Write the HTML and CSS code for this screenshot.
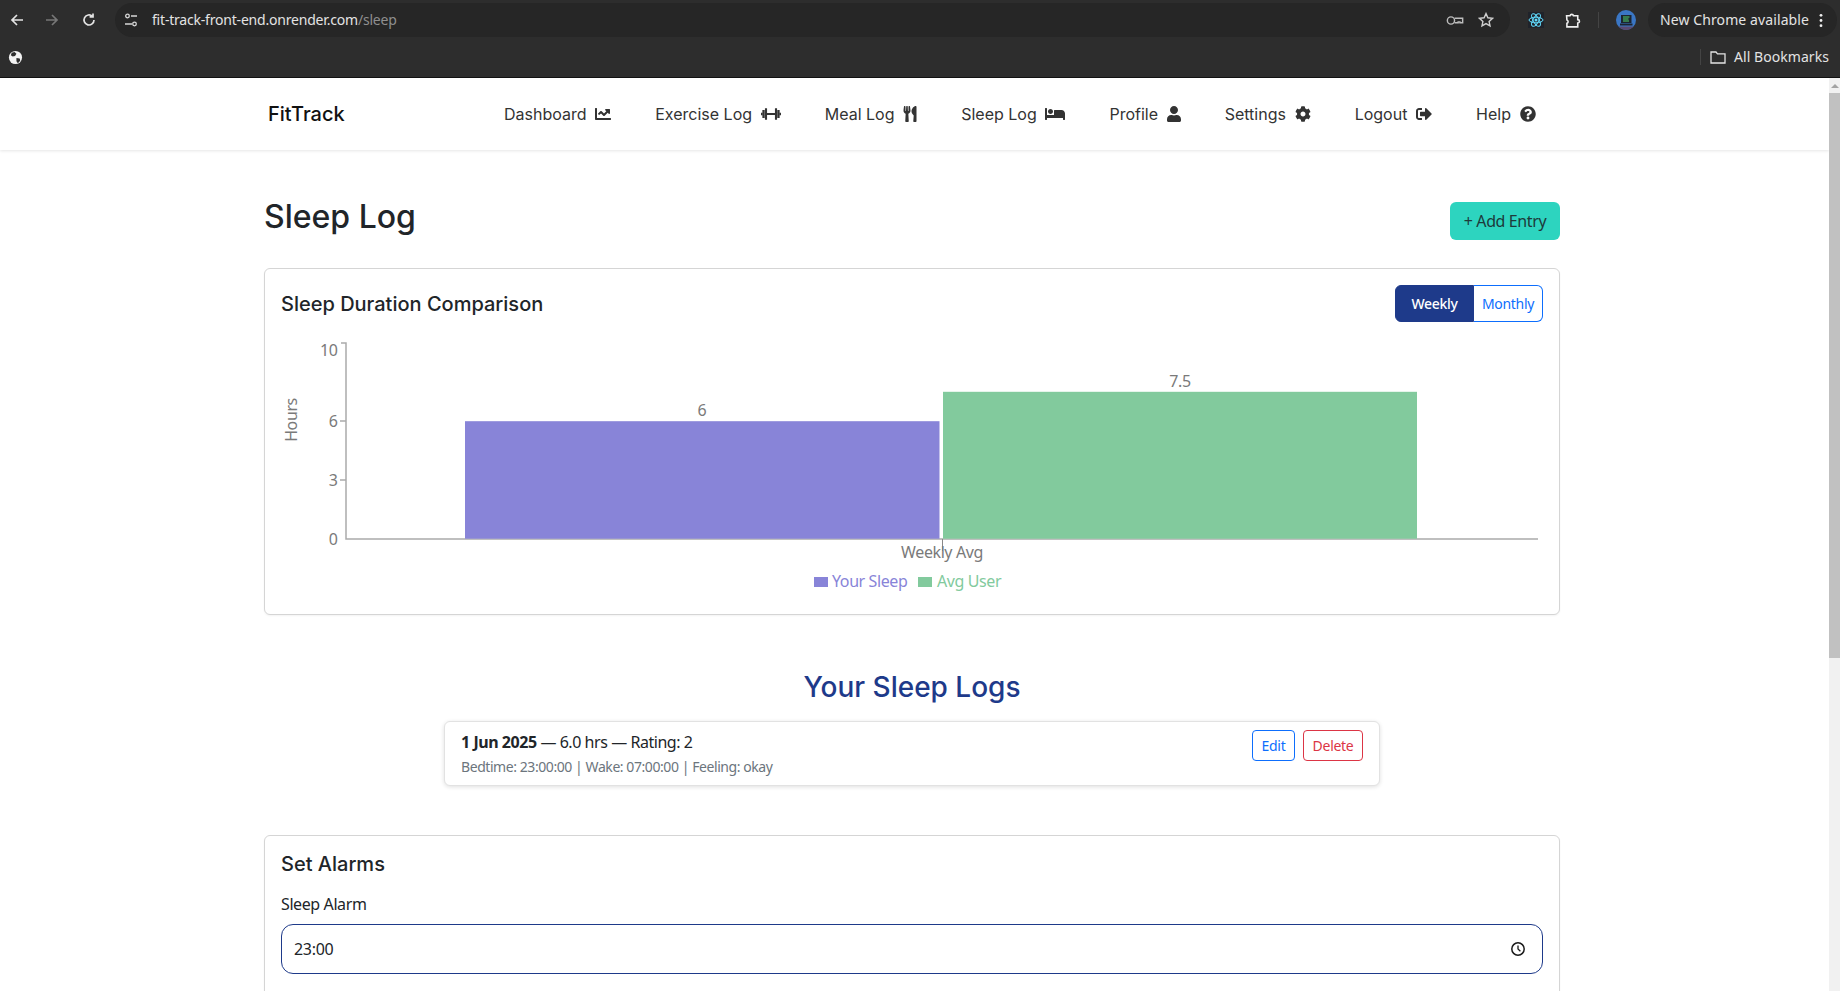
FILE: index.html
```html
<!DOCTYPE html>
<html lang="en">
<head>
  <meta charset="UTF-8">
  <title>FitTrack - Sleep Log</title>
  <link rel="stylesheet" href="styles.css">
</head>
<body>
  <div class="chrome">
    <div class="toolbar">
      <svg class="tb-icon" viewBox="0 0 16 16"><path d="M14 8H3M8 3L3 8l5 5" fill="none" stroke="#e3e3e3" stroke-width="1.7"/></svg>
      <svg class="tb-icon tb-next" viewBox="0 0 16 16"><path d="M2 8h11M8 3l5 5-5 5" fill="none" stroke="#777" stroke-width="1.7"/></svg>
      <svg class="tb-icon tb-reload" viewBox="0 0 16 16"><path d="M13 8a5 5 0 1 1-1.6-3.7M12 1.5v3.4H8.6" fill="none" stroke="#e3e3e3" stroke-width="1.7"/></svg>
      <div class="omnibox">
        <svg class="tune" viewBox="0 0 16 16"><g fill="none" stroke="#d8d8d8" stroke-width="1.3"><circle cx="4.5" cy="4" r="1.8"/><circle cx="11.5" cy="12" r="1.8"/><path d="M8 4h6M2 12h7"/></g></svg>
        <span class="url">fit-track-front-end.onrender.com<span class="url-path">/sleep</span></span>
        <svg class="key" viewBox="0 0 20 12"><g fill="none" stroke="#bdbdbd" stroke-width="1.6"><circle cx="5.5" cy="6" r="4"/><path d="M9.5 3.5h9v5h-3v-1h-2v1h-4"/></g></svg>
        <svg class="star" viewBox="0 0 16 16"><path d="M8 1.6l1.9 4.2 4.6.5-3.4 3.1.9 4.5L8 11.6l-4 2.3.9-4.5L1.5 6.3l4.6-.5z" fill="none" stroke="#cfcfcf" stroke-width="1.4"/></svg>
      </div>
      <svg class="react" viewBox="0 0 16 16"><rect width="16" height="16" fill="#20232a"/><g fill="none" stroke="#61dafb" stroke-width="1"><ellipse cx="8" cy="8" rx="7" ry="2.8"/><ellipse cx="8" cy="8" rx="7" ry="2.8" transform="rotate(60 8 8)"/><ellipse cx="8" cy="8" rx="7" ry="2.8" transform="rotate(120 8 8)"/></g><circle cx="8" cy="8" r="1.5" fill="#61dafb"/></svg>
      <svg class="puzzle" viewBox="0 0 16 16"><path d="M1.5 3.5h3.2a1.7 1.7 0 0 1 3.3 0h4v3.7a1.6 1.6 0 0 1 0 3.2v3.6H1.8v-3.3a1.7 1.7 0 0 0 0-3.2z" fill="none" stroke="#efefef" stroke-width="1.5"/></svg>
      <div class="tb-sep"></div>
      <svg class="avatar" viewBox="0 0 20 20"><circle cx="10" cy="10" r="10" fill="#3a76c4"/><path d="M2.5 16.5h15A10 10 0 0 1 2.5 16.5z" fill="#5a4a70"/><rect x="5" y="5" width="10.5" height="8" fill="#1c2430"/><path d="M7 7h6.500M7 9h5.500M7 11h6" stroke="#4fd06a"/><rect x="4" y="13.500" width="12.500" height="2" fill="#1c2430"/></svg>
      <div class="update-pill">
        <span>New Chrome available</span>
        <svg class="dots" viewBox="0 0 4 16"><circle cx="2" cy="2.500" r="1.500"/><circle cx="2" cy="8" r="1.500"/><circle cx="2" cy="13.500" r="1.500"/></svg>
      </div>
    </div>
    <div class="bookmarks">
      <svg class="globe" viewBox="0 0 16 16"><circle cx="8" cy="8" r="7" fill="#f2f2f2"/><path d="M4 3l3-1 2 2-1.500 2.500L5 7 3 5.500zM9 8.500l3.500.5.500 2.500-2.500 2.500-1.500-2z" fill="#2d2d2d"/></svg>
      <div class="bm-right">
        <div class="bm-sep"></div>
        <svg class="folder" viewBox="0 0 16 14"><path d="M1 2h5l1.500 1.800H15V13H1z" fill="none" stroke="#e3e3e3" stroke-width="1.300"/></svg>
        <span>All Bookmarks</span>
      </div>
    </div>
  </div>

  <div class="viewport">
    <div class="page">
      <nav class="navbar">
        <span class="brand">FitTrack</span>
        <ul class="nav-links">
          <li>Dashboard
            <svg viewBox="0 0 512 512"><path d="M496 384H64V80c0-8.840-7.160-16-16-16H16C7.160 64 0 71.160 0 80v336c0 17.670 14.330 32 32 32h464c8.840 0 16-7.160 16-16v-32c0-8.840-7.160-16-16-16zM464 96H345.940c-21.380 0-32.090 25.850-16.970 40.970l32.400 32.400L288 242.750l-73.370-73.370c-12.500-12.500-32.760-12.500-45.250 0l-68.690 68.690c-6.250 6.250-6.250 16.380 0 22.630l22.620 22.620c6.250 6.250 16.380 6.250 22.630 0L192 237.250l73.370 73.370c12.500 12.500 32.760 12.500 45.250 0l96-96 32.400 32.400c15.120 15.120 40.970 4.410 40.970-16.970V112c0-8.840-7.160-16-16-16z"/></svg>
          </li>
          <li>Exercise Log
            <svg class="wide" viewBox="0 0 640 512"><path d="M0 216h40v80H0zM44 130h66q8 0 8 8v236q0 8-8 8H44zM126 70h60q8 0 8 8v356q0 8-8 8h-60zM194 226h252v60H194zM454 70h60v372h-60q-8 0-8-8V78q0-8 8-8zM530 130h66v252h-66q-8 0-8-8V138q0-8 8-8zM600 216h40v80h-40z"/></svg>
          </li>
          <li>Meal Log
            <svg class="narrow" viewBox="0 0 416 512"><path d="M207.900 15.200c.8 4.700 16.100 94.500 16.100 128.800 0 52.300-27.800 89.600-68.900 104.600L168 486.700c.7 13.700-10.200 25.300-24 25.300H80c-13.700 0-24.700-11.500-24-25.300l12.900-238.100C27.700 233.600 0 196.200 0 144 0 109.600 15.300 19.900 16.100 15.200 19.300-5.100 61.400-5.400 64 16.300v141.200c1.300 3.400 15.100 3.200 16 0 1.400-25.300 7.900-139.200 8-141.800 3.300-20.800 44.700-20.800 47.900 0 .2 2.700 6.600 116.500 8 141.800.9 3.200 14.800 3.400 16 0V16.300c2.600-21.600 44.800-21.400 48-1.100zm119.200 285.700l-15 185.100c-1.200 14 9.900 26 23.900 26h56c13.300 0 24-10.700 24-24V24c0-13.200-10.700-24-24-24-82.500 0-221.400 178.500-64.900 300.900z"/></svg>
          </li>
          <li>Sleep Log
            <svg class="wide" viewBox="0 0 640 512"><path d="M176 256c44.110 0 80-35.890 80-80s-35.890-80-80-80-80 35.890-80 80 35.890 80 80 80zm352-128H304c-8.840 0-16 7.160-16 16v144H64V80c0-8.840-7.160-16-16-16H16C7.160 64 0 71.160 0 80v352c0 8.840 7.160 16 16 16h32c8.840 0 16-7.160 16-16v-48h512v48c0 8.840 7.160 16 16 16h32c8.840 0 16-7.160 16-16V240c0-61.860-50.140-112-112-112z"/></svg>
          </li>
          <li>Profile
            <svg class="narrow" viewBox="0 0 448 512"><path d="M224 256c70.700 0 128-57.300 128-128S294.700 0 224 0 96 57.300 96 128s57.300 128 128 128zm89.600 32h-16.700c-22.200 10.200-46.900 16-72.900 16s-50.600-5.800-72.900-16h-16.700C60.200 288 0 348.200 0 422.400V464c0 26.500 21.500 48 48 48h352c26.500 0 48-21.500 48-48v-41.600c0-74.200-60.200-134.400-134.400-134.400z"/></svg>
          </li>
          <li>Settings
            <svg viewBox="0 0 512 512"><path d="M487.400 315.700l-42.600-24.600c4.300-23.200 4.300-47 0-70.200l42.600-24.600c4.900-2.800 7.100-8.600 5.500-14-11.100-35.600-30-67.800-54.700-94.600-3.800-4.100-10-5.100-14.800-2.300L380.800 110c-17.900-15.400-38.500-27.300-60.800-35.100V25.800c0-5.600-3.900-10.500-9.400-11.700-36.700-8.200-74.300-7.800-109.200 0-5.500 1.200-9.400 6.100-9.400 11.700V75c-22.200 7.900-42.800 19.800-60.800 35.100L88.700 85.500c-4.900-2.800-11-1.900-14.800 2.300-24.700 26.700-43.600 58.900-54.700 94.600-1.700 5.400.6 11.200 5.500 14L67.300 221c-4.300 23.200-4.300 47 0 70.200l-42.600 24.600c-4.900 2.800-7.100 8.600-5.500 14 11.100 35.600 30 67.800 54.700 94.600 3.800 4.100 10 5.100 14.800 2.300l42.600-24.600c17.900 15.400 38.500 27.300 60.800 35.100v49.200c0 5.600 3.900 10.500 9.400 11.700 36.700 8.200 74.300 7.800 109.200 0 5.500-1.200 9.400-6.100 9.400-11.700v-49.200c22.200-7.900 42.800-19.800 60.800-35.100l42.600 24.600c4.900 2.800 11 1.900 14.800-2.300 24.700-26.700 43.600-58.900 54.700-94.600 1.500-5.500-.7-11.300-5.600-14.100zM256 336c-44.100 0-80-35.900-80-80s35.900-80 80-80 80 35.900 80 80-35.900 80-80 80z"/></svg>
          </li>
          <li>Logout
            <svg viewBox="0 0 512 512"><path d="M497 273L329 441c-15 15-41 4.500-41-17v-96H152c-13.300 0-24-10.700-24-24v-96c0-13.300 10.700-24 24-24h136V88c0-21.400 25.900-32 41-17l168 168c9.300 9.400 9.300 24.600 0 34zM192 436v-40c0-6.600-5.400-12-12-12H96c-17.700 0-32-14.300-32-32V160c0-17.700 14.300-32 32-32h84c6.600 0 12-5.400 12-12V76c0-6.600-5.400-12-12-12H96c-53 0-96 43-96 96v192c0 53 43 96 96 96h84c6.600 0 12-5.400 12-12z"/></svg>
          </li>
          <li>Help
            <svg viewBox="0 0 512 512"><path d="M504 256c0 136.997-111.043 248-248 248S8 392.997 8 256C8 119.083 119.043 8 256 8s248 111.083 248 248zM262.655 90c-54.497 0-89.255 22.957-116.549 63.758-3.536 5.286-2.353 12.415 2.715 16.258l34.699 26.310c5.205 3.947 12.621 3.008 16.665-2.122 17.864-22.658 30.113-35.797 57.303-35.797 20.429 0 45.698 13.148 45.698 32.958 0 14.976-12.363 22.667-32.534 33.976C247.128 238.528 216 254.941 216 296v4c0 6.627 5.373 12 12 12h56c6.627 0 12-5.373 12-12v-1.333c0-28.462 83.186-29.647 83.186-106.667 0-58.002-60.165-102-116.531-102zM256 338c-25.365 0-46 20.635-46 46 0 25.364 20.635 46 46 46s46-20.636 46-46c0-25.365-20.635-46-46-46z"/></svg>
          </li>
        </ul>
      </nav>

      <main class="content">
        <div class="title-row">
          <h1>Sleep Log</h1>
          <button class="btn-add">+ Add Entry</button>
        </div>

        <section class="card chart-card">
          <div class="card-head">
            <h3>Sleep Duration Comparison</h3>
            <div class="toggle">
              <button class="toggle-on">Weekly</button>
              <button class="toggle-off">Monthly</button>
            </div>
          </div>
          <svg class="chart" viewBox="281 332 1262 270" width="1262" height="270">
            <g fill="none" stroke="#aaa" stroke-width="1.500">
              <path d="M341 343h5v196h1192"/>
              <path d="M340 421h6M340 480h6"/>
            </g>
            <rect x="465" y="421.200" width="474.500" height="117.500" fill="#8884d8"/>
            <rect x="943" y="391.800" width="474" height="146.900" fill="#82ca9d"/>
            <path d="M942.500 539v12" stroke="#888" fill="none"/>
            <g class="tick" text-anchor="end">
              <text x="337.500" y="356">10</text>
              <text x="337.500" y="427">6</text>
              <text x="337.500" y="486">3</text>
              <text x="337.500" y="545">0</text>
            </g>
            <text class="tick" transform="translate(297 420) rotate(-90)" text-anchor="middle">Hours</text>
            <g class="tick" text-anchor="middle">
              <text x="702" y="416">6</text>
              <text x="1180" y="387">7.5</text>
              <text x="942" y="558">Weekly Avg</text>
            </g>
            <rect x="814" y="577" width="14" height="10" fill="#8884d8"/>
            <text class="legend" x="832" y="587" fill="#8884d8">Your Sleep</text>
            <rect x="918" y="577" width="14" height="10" fill="#82ca9d"/>
            <text class="legend" x="937" y="587" fill="#82ca9d">Avg User</text>
          </svg>
        </section>

        <h2 class="logs-title">Your Sleep Logs</h2>

        <div class="log-card">
          <div>
            <div class="log-main"><strong>1 Jun 2025</strong> — 6.0 hrs — Rating: 2</div>
            <div class="log-sub">Bedtime: 23:00:00 | Wake: 07:00:00 | Feeling: okay</div>
          </div>
          <div class="log-actions">
            <button class="btn-edit">Edit</button>
            <button class="btn-delete">Delete</button>
          </div>
        </div>

        <section class="card alarm-card">
          <h3>Set Alarms</h3>
          <label class="field-label" for="sleepAlarm">Sleep Alarm</label>
          <div class="time-field">
            <input id="sleepAlarm" type="text" value="23:00">
            <svg viewBox="0 0 16 16"><circle cx="8" cy="8" r="6.200" fill="none" stroke="#1a1a1a" stroke-width="1.500"/><path d="M8 4.500V8l2.400 2.200" fill="none" stroke="#1a1a1a" stroke-width="1.300"/></svg>
          </div>
        </section>
      </main>
    </div>

    <div class="scrollbar">
      <div class="scroll-arrow"></div>
      <div class="scroll-thumb"></div>
    </div>
  </div>
</body>
</html>
```

FILE: styles.css
```css
* {
  box-sizing: border-box;
}

html, body {
  margin: 0;
  height: 991px;
  overflow: hidden;
}

body {
  font-family: "Noto Sans", sans-serif;
  background: #fff;
  color: #212529;
}

/* browser frame */
.chrome {
  height: 78px;
  background: #2d2d2d;
  border-bottom: 1px solid #111;
  color: #e3e3e3;
  font-size: 14px;
}

.toolbar {
  height: 37px;
  display: flex;
  align-items: center;
  padding-top: 3px;
}

.tb-icon {
  width: 16px;
  height: 16px;
  margin-left: 9px;
  flex: none;
}

.tb-next {
  margin-left: 19px;
}

.tb-reload {
  margin-left: 21px;
}

.omnibox {
  width: 1395px;
  height: 34px;
  margin-left: 18px;
  background: #262626;
  border-radius: 17px;
  display: flex;
  align-items: center;
  padding-left: 8px;
  flex: none;
}

.tune {
  width: 16px;
  height: 16px;
}

.url {
  margin-left: 13px;
  flex: 1;
  letter-spacing: -0.2px;
  position: relative;
  top: -1px;
}

.url-path {
  color: #8f8f8f;
}

.key {
  width: 18px;
  height: 11px;
}

.star {
  width: 16px;
  height: 16px;
  margin-left: 14px;
  margin-right: 16px;
}

.react {
  width: 16px;
  height: 16px;
  margin-left: 18px;
}

.puzzle {
  width: 17px;
  height: 17px;
  margin-left: 21px;
}

.tb-sep {
  width: 1px;
  height: 16px;
  background: #444;
  margin-left: 16px;
}

.avatar {
  width: 20px;
  height: 20px;
  margin-left: 17px;
}

.update-pill {
  width: 189px;
  height: 34px;
  margin-left: 12px;
  border-radius: 17px;
  background: #262626;
  display: flex;
  align-items: center;
  justify-content: space-between;
  padding: 0 14px 0 12px;
  letter-spacing: 0.1px;
  flex: none;
}

.update-pill span {
  position: relative;
  top: -1px;
}

.dots {
  width: 4px;
  height: 15px;
  fill: #eee;
}

.bookmarks {
  height: 40px;
  display: flex;
  align-items: center;
  justify-content: space-between;
  padding: 0 11px 0 8px;
}

.globe {
  width: 15px;
  height: 15px;
}

.bm-right {
  display: flex;
  align-items: center;
  letter-spacing: 0.06px;
}

.bm-right span {
  position: relative;
  top: -1px;
}

.bm-sep {
  width: 1px;
  height: 16px;
  background: #444;
  margin-right: 9px;
}

.folder {
  width: 16px;
  height: 14px;
  margin-right: 8px;
}

/* page */
.viewport {
  height: 913px;
  display: flex;
  overflow: hidden;
}

.page {
  flex: 1;
}

.scrollbar {
  width: 11px;
  background: #f1f1f1;
  flex: none;
}

.scroll-arrow {
  width: 0;
  height: 0;
  margin: 6px auto 5px;
  border-left: 4px solid transparent;
  border-right: 4px solid transparent;
  border-bottom: 4px solid #a3a3a3;
}

.scroll-thumb {
  height: 565px;
  background: #c1c1c1;
}

.navbar {
  height: 72px;
  display: flex;
  align-items: center;
  padding-left: 268px;
  background: #fff;
  box-shadow: 0 1px 3px rgba(0,0,0,0.1);
  font-family: Inter, sans-serif;
}

.brand {
  font-size: 20px;
  font-weight: 500;
  color: #111;
  width: 236px;
}

.nav-links {
  display: flex;
  gap: 44px;
  list-style: none;
  margin: 0;
  padding: 0;
  font-size: 16px;
  color: #333;
}

.nav-links li {
  display: flex;
  align-items: center;
  gap: 8.7px;
}

.nav-links svg {
  width: 16px;
  height: 16px;
  fill: #333;
}

.nav-links svg.wide {
  width: 20px;
}

.nav-links svg.narrow {
  width: 14px;
}

.content {
  width: 1296px;
  margin-left: 264px;
}

.title-row {
  display: flex;
  justify-content: space-between;
  align-items: flex-start;
  padding-top: 47px;
  height: 118px;
}

h1 {
  margin: 0;
  font-family: Inter, sans-serif;
  font-size: 32px;
  font-weight: 500;
  line-height: 39px;
  color: #212529;
}

.btn-add {
  margin-top: 5px;
  width: 110px;
  height: 38px;
  border: none;
  border-radius: 6px;
  background: #2dd4bf;
  color: #1e3a3a;
  font-family: inherit;
  font-size: 16px;
  letter-spacing: -0.4px;
}

.card {
  border: 1px solid #d5d5d5;
  border-radius: 6px;
  padding: 16px;
  background: #fff;
  box-shadow: 0 1px 2px rgba(0,0,0,0.05);
}

.card h3 {
  margin: 0;
  font-family: Inter, sans-serif;
  font-size: 20px;
  font-weight: 500;
  color: #212529;
}

.chart-card {
  height: 347px;
}

.card-head {
  display: flex;
  justify-content: space-between;
  align-items: center;
  height: 37px;
  margin-bottom: 10px;
}

.toggle {
  display: flex;
}

.toggle button {
  height: 37px;
  font-family: inherit;
  font-size: 14px;
  letter-spacing: -0.3px;
  padding: 0;
}

.toggle-on {
  width: 79px;
  background: #1e3a8a;
  color: #fff;
  border: 1px solid #1e3a8a;
  border-radius: 6px 0 0 6px;
  font-weight: 500;
}

.toggle-off {
  width: 69px;
  background: #fff;
  color: #0d6efd;
  border: 1px solid #0d6efd;
  border-left: none;
  border-radius: 0 6px 6px 0;
}

.chart {
  display: block;
  margin-left: 0;
}

.chart text {
  font-family: "Noto Sans", sans-serif;
  font-size: 16px;
  letter-spacing: -0.4px;
}

.tick {
  fill: #7a7a7a;
}

.logs-title {
  margin: 55px 0 17px;
  font-family: Inter, sans-serif;
  font-size: 28px;
  font-weight: 500;
  line-height: 34px;
  text-align: center;
  color: #1e3a8a;
}

.log-card {
  width: 936px;
  height: 65px;
  margin: 0 auto 49px;
  padding: 8px 16px;
  display: flex;
  justify-content: space-between;
  border: 1px solid #e2e2e2;
  border-radius: 6px;
  box-shadow: 0 1px 4px rgba(0,0,0,0.13);
  background: #fff;
}

.log-main {
  font-size: 16px;
  line-height: 24px;
  letter-spacing: -0.45px;
}

.log-sub {
  margin-top: 2px;
  font-size: 14px;
  line-height: 21px;
  color: #6c757d;
  letter-spacing: -0.43px;
}

.log-actions {
  display: flex;
  gap: 8px;
}

.log-actions button {
  height: 31px;
  background: #fff;
  border-radius: 4px;
  font-family: inherit;
  font-size: 14px;
  letter-spacing: -0.3px;
  padding: 0;
}

.btn-edit {
  width: 43px;
  color: #0d6efd;
  border: 1px solid #0d6efd;
}

.btn-delete {
  width: 60px;
  color: #dc3545;
  border: 1px solid #dc3545;
}

.alarm-card {
  height: 300px;
}

.field-label {
  display: block;
  margin: 16px 0 8px;
  font-size: 16px;
  line-height: 24px;
  letter-spacing: -0.4px;
  color: #212529;
}

.time-field {
  height: 50px;
  display: flex;
  align-items: center;
  padding: 0 16px 0 12px;
  border: 1.500px solid #1e3a8a;
  border-radius: 12px;
}

.time-field input {
  flex: 1;
  border: none;
  outline: none;
  padding: 0;
  font-family: inherit;
  font-size: 16px;
  letter-spacing: -0.3px;
  color: #212529;
}

.time-field svg {
  width: 16px;
  height: 16px;
}
```
